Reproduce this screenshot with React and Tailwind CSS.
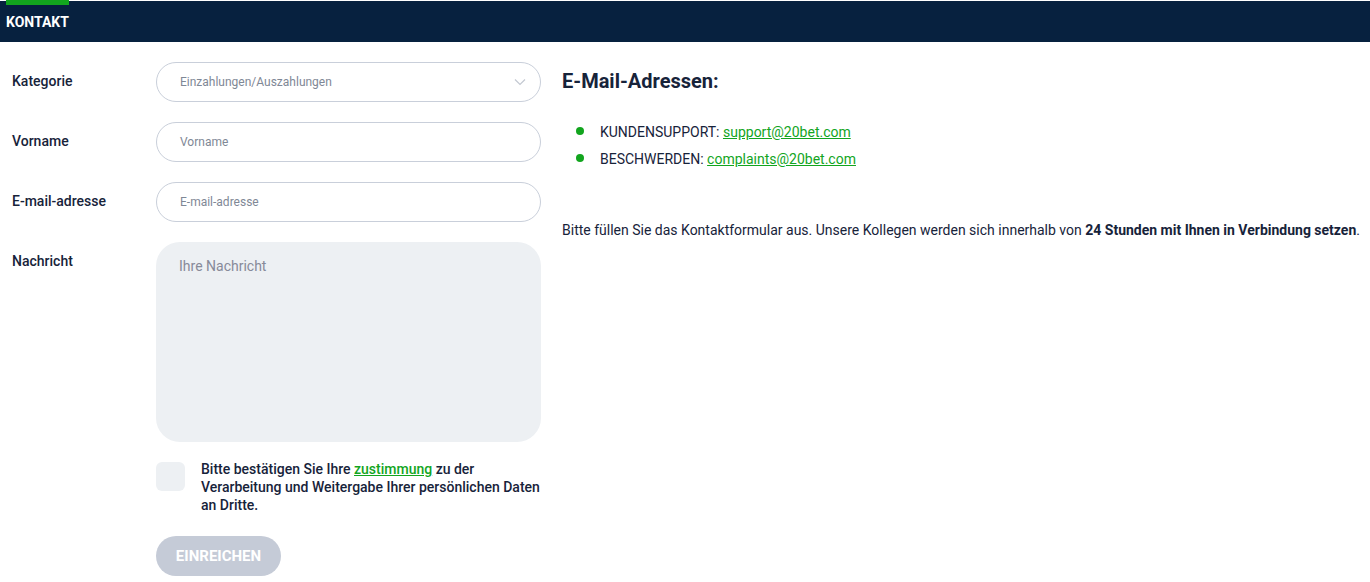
import React from "react";

export default function App() {
  return (
    <div className="w-[1370px] h-[582px] bg-white overflow-hidden" style={{ fontFamily: "Roboto, 'Noto Sans', sans-serif" }}>
      <div className="h-[41px] bg-[#07213f] mt-px relative flex items-center px-[6px]">
        <div className="absolute left-[6px] top-[-1px] w-[63px] h-[5px] bg-[#12a51e]" />
        <span className="text-white font-bold text-[14px] leading-none mt-[1px]">KONTAKT</span>
      </div>
      <div className="flex pt-[20px] pl-[12px]">
        <div className="w-[529px] flex flex-col gap-[20px]">
          <div className="flex">
            <div className="w-[144px] pt-[9px] text-[14px] font-medium text-[#17233a]">Kategorie</div>
            <div className="w-[385px] h-[40px] rounded-full border border-[#c9cfda] flex items-center justify-between pl-[23px] pr-[14px]">
              <span className="text-[12px] text-[#7f8896]">Einzahlungen/Auszahlungen</span>
              <svg width="12" height="8" viewBox="0 0 12 8" fill="none"><path d="M1 1.5l5 5 5-5" stroke="#c3c8d1" strokeWidth="1.2" /></svg>
            </div>
          </div>
          <div className="flex">
            <div className="w-[144px] pt-[9px] text-[14px] font-medium text-[#17233a]">Vorname</div>
            <div className="w-[385px] h-[40px] rounded-full border border-[#c9cfda] flex items-center pl-[23px]">
              <span className="text-[12px] text-[#7f8896]">Vorname</span>
            </div>
          </div>
          <div className="flex">
            <div className="w-[144px] pt-[9px] text-[14px] font-medium text-[#17233a]">E-mail-adresse</div>
            <div className="w-[385px] h-[40px] rounded-full border border-[#c9cfda] flex items-center pl-[23px]">
              <span className="text-[12px] text-[#7f8896]">E-mail-adresse</span>
            </div>
          </div>
          <div className="flex">
            <div className="w-[144px] pt-[9px] text-[14px] font-medium text-[#17233a]">Nachricht</div>
            <div className="w-[385px] h-[200px] rounded-[24px] bg-[#edf0f3] pl-[23px] pt-[12px]">
              <span className="text-[14px] text-[#878a99]">Ihre Nachricht</span>
            </div>
          </div>
          <div className="flex items-start pl-[144px]">
            <div className="w-[29px] h-[29px] rounded-[6px] bg-[#edf0f3] shrink-0" />
            <p className="ml-[16px] -mt-[2px] mb-[2px] text-[14px] leading-[18px] font-medium text-[#17233a] w-[345px]">
              Bitte bestätigen Sie Ihre <a className="text-[#12a51e] underline">zustimmung</a> zu der Verarbeitung und Weitergabe Ihrer persönlichen Daten an Dritte.
            </p>
          </div>
          <div className="pl-[144px]">
            <div className="w-[125px] h-[40px] rounded-full bg-[#c5cbd7] flex items-center justify-center text-white font-bold text-[15px]">EINREICHEN</div>
          </div>
        </div>
        <div className="ml-[21px] flex-1">
          <h2 className="text-[20px] font-bold text-[#17233a] mt-[7px] leading-[24px]">E-Mail-Adressen:</h2>
          <ul className="mt-[30px] flex flex-col gap-[9px]">
            <li className="flex items-center text-[14px] text-[#17233a] leading-[18px]">
              <span className="w-[8px] h-[8px] rounded-full bg-[#12a51e] ml-[14px] mr-[16px] mb-[3px]" />
              KUNDENSUPPORT:&nbsp;<a className="text-[#12a51e] underline">support@20bet.com</a>
            </li>
            <li className="flex items-center text-[14px] text-[#17233a] leading-[18px]">
              <span className="w-[8px] h-[8px] rounded-full bg-[#12a51e] ml-[14px] mr-[16px] mb-[3px]" />
              BESCHWERDEN:&nbsp;<a className="text-[#12a51e] underline">complaints@20bet.com</a>
            </li>
          </ul>
          <p className="mt-[53px] text-[14px] text-[#17233a] leading-[18px]">
            Bitte füllen Sie das Kontaktformular aus. Unsere Kollegen werden sich innerhalb von <b className="font-bold">24 Stunden mit Ihnen in Verbindung setzen</b>.
          </p>
        </div>
      </div>
    </div>
  );
}
